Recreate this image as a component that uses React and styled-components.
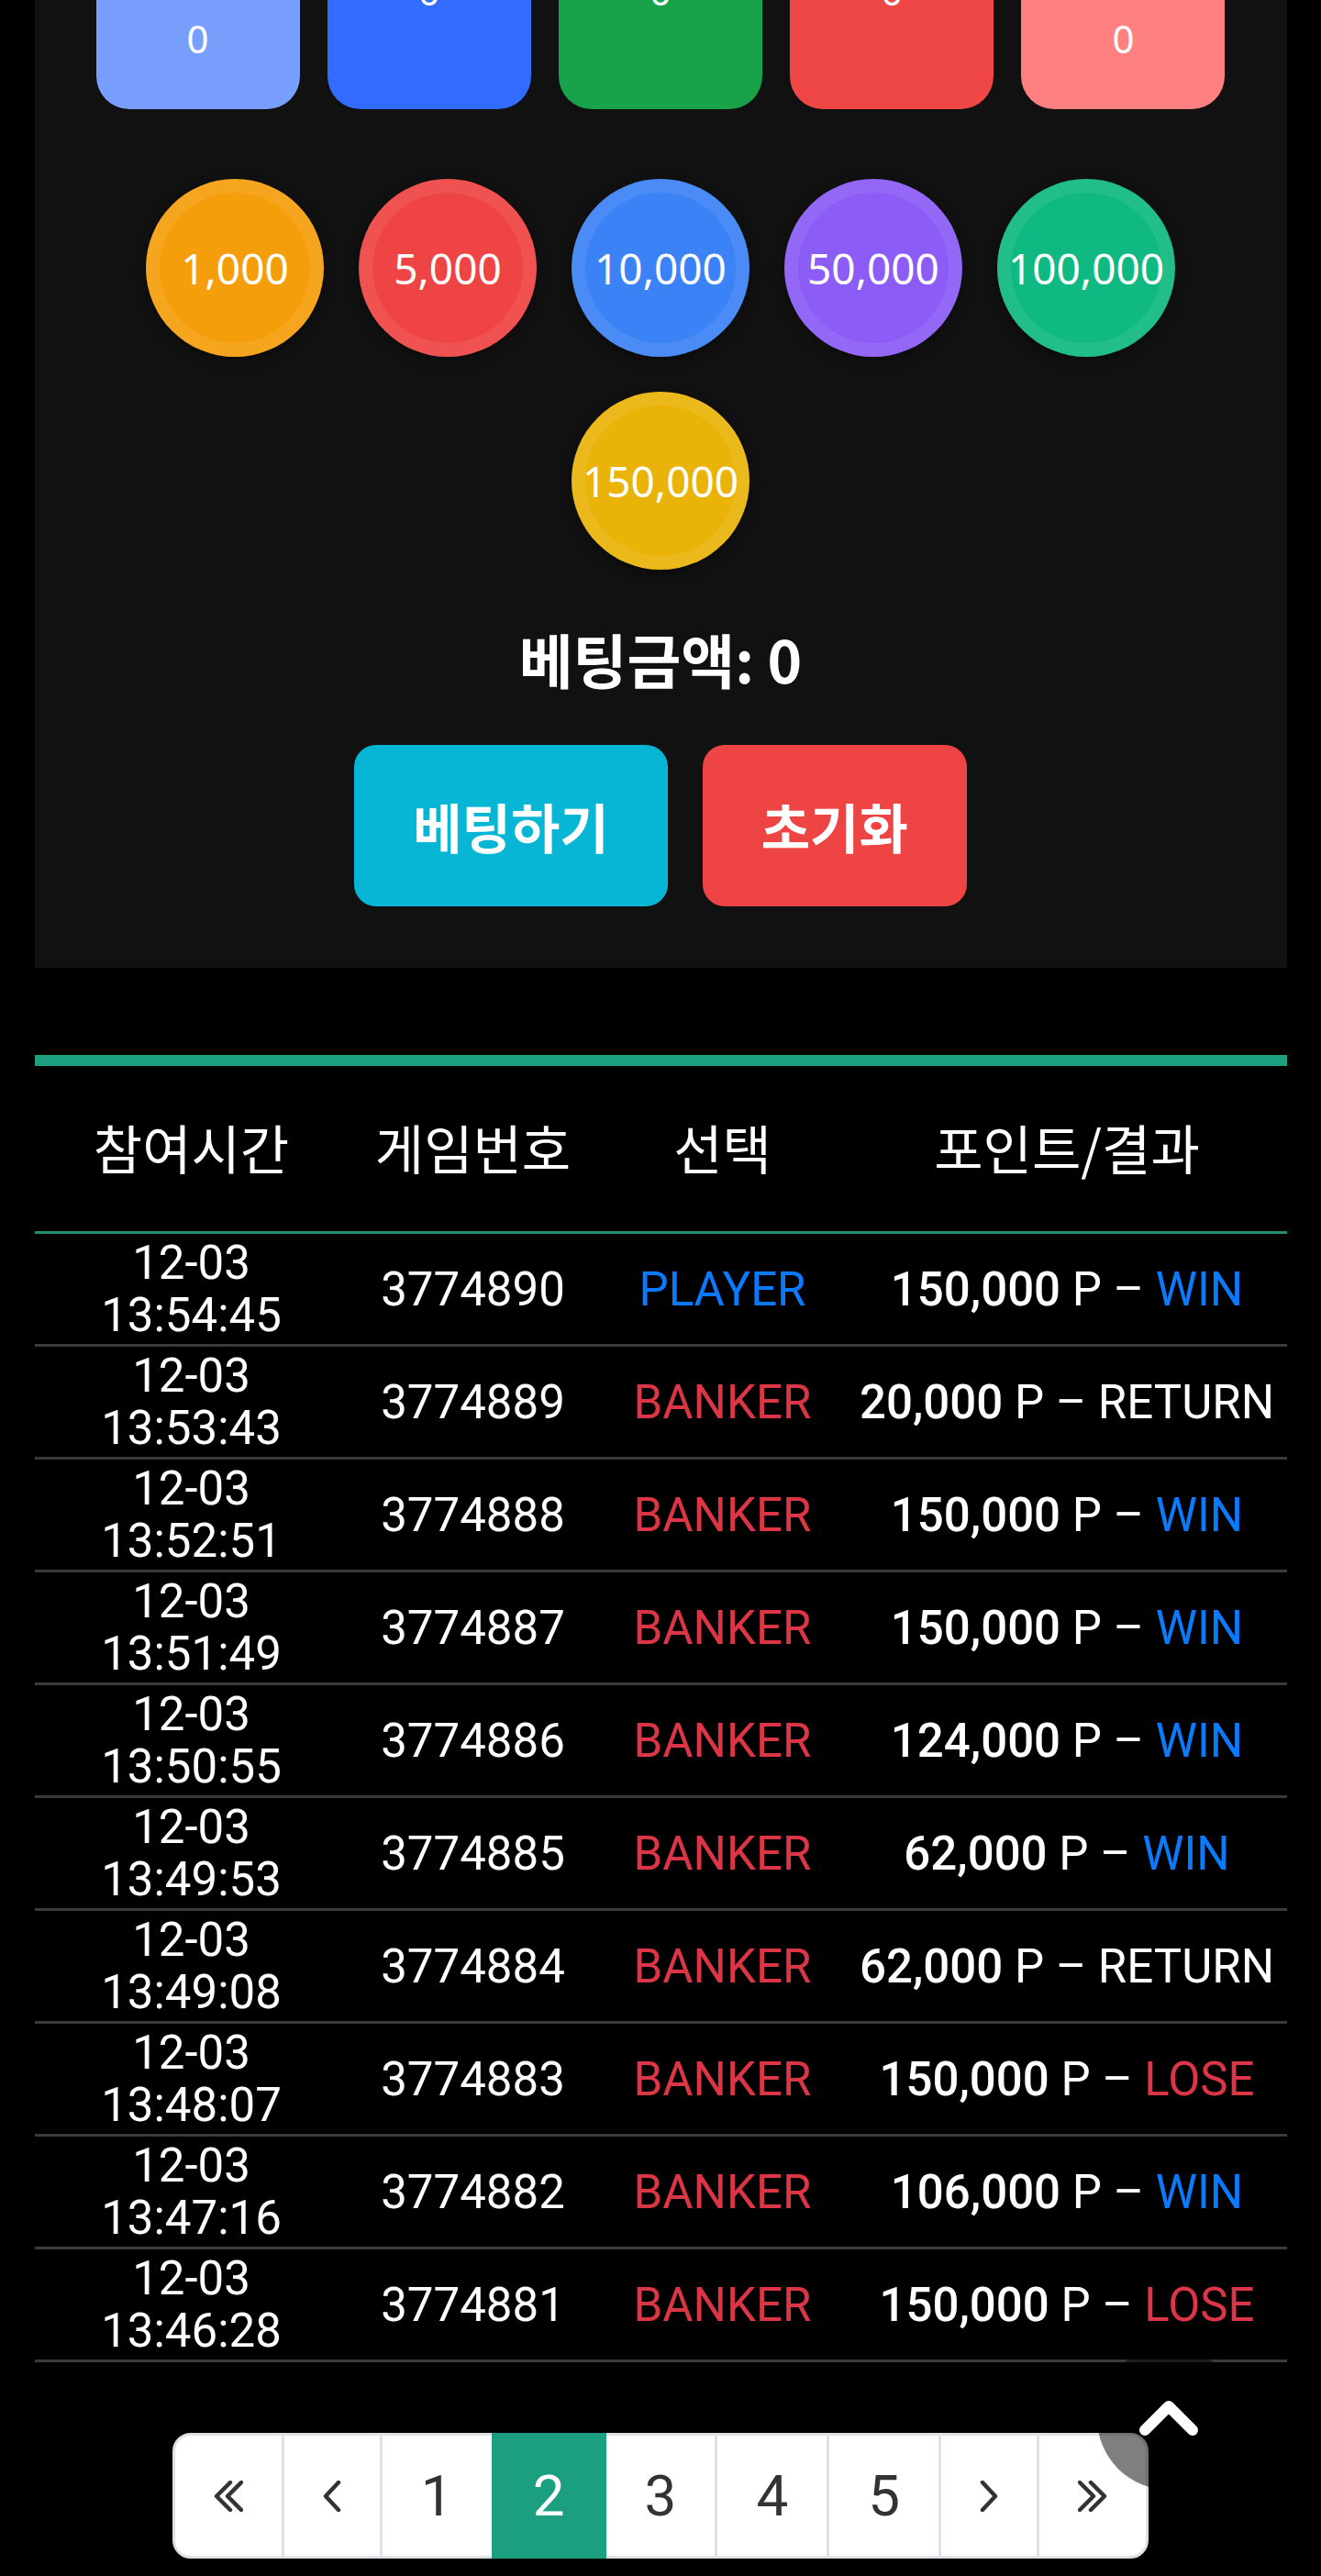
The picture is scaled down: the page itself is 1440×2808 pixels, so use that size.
import React from "react";
import styled, { createGlobalStyle } from "styled-components";

const GlobalStyle = createGlobalStyle`
    html, body {
        margin: 0;
        padding: 0;
        background: #000;
    }
    * {
        box-sizing: border-box;
    }
`;

// side boxes sit lower than the three main ones
const betBoxes = [
    { color: "#789ffe", side: true },
    { color: "#316cff", side: false },
    { color: "#18a34b", side: false },
    { color: "#ef4646", side: false },
    { color: "#ff8080", side: true },
];

const chips = [
    { value: "1,000", color: "#f59e0b" },
    { value: "5,000", color: "#ef4444" },
    { value: "10,000", color: "#3b82f6" },
    { value: "50,000", color: "#8b5cf6" },
    { value: "100,000", color: "#10b981" },
    { value: "150,000", color: "#eab308" },
];

const history = [
    ["13:54:45", "3774890", "PLAYER", "150,000", "WIN"],
    ["13:53:43", "3774889", "BANKER", "20,000", "RETURN"],
    ["13:52:51", "3774888", "BANKER", "150,000", "WIN"],
    ["13:51:49", "3774887", "BANKER", "150,000", "WIN"],
    ["13:50:55", "3774886", "BANKER", "124,000", "WIN"],
    ["13:49:53", "3774885", "BANKER", "62,000", "WIN"],
    ["13:49:08", "3774884", "BANKER", "62,000", "RETURN"],
    ["13:48:07", "3774883", "BANKER", "150,000", "LOSE"],
    ["13:47:16", "3774882", "BANKER", "106,000", "WIN"],
    ["13:46:28", "3774881", "BANKER", "150,000", "LOSE"],
];

const Chevron = ({ double, flip }) => (
    <svg
        width={double ? 32 : 20}
        height="34"
        viewBox={double ? "0 0 32 34" : "0 0 20 34"}
        style={flip ? { transform: "scaleX(-1)" } : undefined}
    >
        <g fill="none" stroke="#333" strokeWidth="4.5" strokeLinecap="round" strokeLinejoin="round">
            {double ? (
                <>
                    <polyline points="18,2 3,17 18,32" />
                    <polyline points="30,2 15,17 30,32" />
                </>
            ) : (
                <polyline points="17,2 3,17 17,32" />
            )}
        </g>
    </svg>
);

const App = () => {
    return (
        <>
            <GlobalStyle />
            <Page>
                <BetPanel>
                    <BoxRow>
                        {betBoxes.map((b, i) => (
                            <BetBox key={i} $color={b.color} $side={b.side}>
                                <BoxAmount>0</BoxAmount>
                            </BetBox>
                        ))}
                    </BoxRow>

                    <Chips>
                        {chips.map((c) => (
                            <Chip key={c.value} $color={c.color}>{c.value}</Chip>
                        ))}
                    </Chips>

                    <BetTotal>베팅금액: 0</BetTotal>

                    <Actions>
                        <ActionButton $color="#06b6d4">베팅하기</ActionButton>
                        <ActionButton $color="#ef4444">초기화</ActionButton>
                    </Actions>
                </BetPanel>

                <History>
                    <colgroup>
                        <col style={{ width: "342px" }} />
                        <col style={{ width: "272px" }} />
                        <col style={{ width: "272px" }} />
                        <col />
                    </colgroup>
                    <thead>
                        <tr>
                            <Th>참여시간</Th>
                            <Th>게임번호</Th>
                            <Th>선택</Th>
                            <Th>포인트/결과</Th>
                        </tr>
                    </thead>
                    <tbody>
                        {history.map((r) => (
                            <tr key={r[1]}>
                                <Td>12-03<br />{r[0]}</Td>
                                <Td>{r[1]}</Td>
                                <Td>
                                    <Pick $player={r[2] === "PLAYER"}>{r[2]}</Pick>
                                </Td>
                                <Td>
                                    <Points>{r[3]}</Points> P – <Result $kind={r[4]}>{r[4]}</Result>
                                </Td>
                            </tr>
                        ))}
                    </tbody>
                </History>

                <Pagination>
                    <PageItem aria-label="first"><Chevron double /></PageItem>
                    <PageItem aria-label="prev"><Chevron /></PageItem>
                    {["1", "2", "3", "4", "5"].map((p) => (
                        <PageItem key={p} $active={p === "2"}>{p}</PageItem>
                    ))}
                    <PageItem aria-label="next"><Chevron flip /></PageItem>
                    <PageItem aria-label="last"><Chevron double flip /></PageItem>
                </Pagination>
            </Page>

            <TopButton aria-label="top">
                <svg width="156" height="156" viewBox="0 0 156 156">
                    <polyline
                        points="52,91 78,65 104,91"
                        fill="none"
                        stroke="#fff"
                        strokeWidth="12"
                        strokeLinecap="round"
                        strokeLinejoin="round"
                    />
                </svg>
            </TopButton>
        </>
    );
};

const Page = styled.div`
    padding: 0 37.5px 22px;
    margin-top: -217px;
`;

const BetPanel = styled.div`
    background: #111111;
    padding: 36px 67px 67px;
    display: flex;
    flex-direction: column;
    align-items: center;
    font-family: "Noto Sans", "Noto Sans CJK KR", sans-serif;
    color: #fff;
`;

const BoxRow = styled.div`
    width: 100%;
    display: grid;
    grid-template-columns: repeat(5, 1fr);
    gap: 30px;
`;

const BetBox = styled.div`
    height: 300px;
    display: flex;
    flex-direction: column;
    align-items: center;
    justify-content: flex-end;
    padding-bottom: ${(p) => (p.$side ? "47px" : "99px")};
    border-radius: 36px;
    background: ${(p) => p.$color};
`;

const BoxAmount = styled.div`
    font-size: 42px;
    line-height: 60px;
`;

const Chips = styled.div`
    margin-top: 76px;
    width: 1130px;
    display: flex;
    flex-wrap: wrap;
    justify-content: center;
    gap: 38px;
`;

const Chip = styled.div`
    width: 194px;
    height: 194px;
    border-radius: 50%;
    border: 15px solid rgba(255, 255, 255, 0.08);
    background: ${(p) => p.$color};
    box-shadow: 0 4px 12px rgba(0, 0, 0, 0.35);
    display: flex;
    align-items: center;
    justify-content: center;
    font-size: 46px;
    font-weight: 400;
    color: #fff;
    white-space: nowrap;
`;

const BetTotal = styled.div`
    margin-top: 54px;
    font-size: 64px;
    line-height: 84px;
    font-weight: 700;
    font-family: "Noto Sans CJK KR", sans-serif;
`;

const Actions = styled.div`
    margin-top: 53px;
    display: flex;
    gap: 38px;
`;

const ActionButton = styled.button`
    border: none;
    border-radius: 24px;
    padding: 48px 64px;
    background: ${(p) => p.$color};
    color: #fff;
    font-family: "Noto Sans CJK KR", sans-serif;
    font-size: 58px;
    line-height: 80px;
    font-weight: 700;
    cursor: pointer;
`;

const History = styled.table`
    margin-top: 95px;
    width: 100%;
    table-layout: fixed;
    border-collapse: collapse;
    border-top: 12px solid #1b9f80;
    font-family: Roboto, "Noto Sans CJK KR", sans-serif;
    color: #fff;
    text-align: center;
`;

const Th = styled.th`
    font-size: 58px;
    line-height: 60px;
    font-weight: 400;
    padding: 58px 0 62px;
    border-bottom: 3px solid #1e8f73;
    font-family: "Noto Sans CJK KR", sans-serif;
`;

const Td = styled.td`
    font-size: 51px;
    line-height: 57px;
    padding: 3px 0;
    border-bottom: 3px solid #3b3b3b;
    vertical-align: middle;
    white-space: nowrap;
`;

const Pick = styled.span`
    color: ${(p) => (p.$player ? "#0a7bff" : "#dc3545")};
`;

const Points = styled.span`
    font-weight: 500;
`;

const Result = styled.span`
    color: ${(p) =>
        p.$kind === "WIN" ? "#0a7bff" : p.$kind === "LOSE" ? "#dc3545" : "#fff"};
`;

const Pagination = styled.div`
    margin-top: 77px;
    display: flex;
    justify-content: center;
    font-family: Roboto, sans-serif;
`;

const PageItem = styled.div`
    height: 137px;
    padding: 0 42px;
    display: flex;
    align-items: center;
    justify-content: center;
    font-size: 62px;
    border: 3px solid ${(p) => (p.$active ? "#1b9f80" : "#dee2e6")};
    background: ${(p) => (p.$active ? "#1b9f80" : "#fff")};
    color: ${(p) => (p.$active ? "#fff" : "#333")};
    margin-left: -3px;
    position: relative;
    z-index: ${(p) => (p.$active ? 1 : 0)};

    &:first-child {
        margin-left: 0;
        border-radius: 20px 0 0 20px;
    }
    &:last-child {
        border-radius: 0 20px 20px 0;
    }
`;

const TopButton = styled.button`
    position: fixed;
    right: 88px;
    bottom: 94px;
    width: 156px;
    height: 156px;
    padding: 0;
    border: none;
    border-radius: 50%;
    background: rgba(0, 0, 0, 0.5);
    display: flex;
    align-items: center;
    justify-content: center;
    z-index: 10;
    cursor: pointer;
`;

export default App;
